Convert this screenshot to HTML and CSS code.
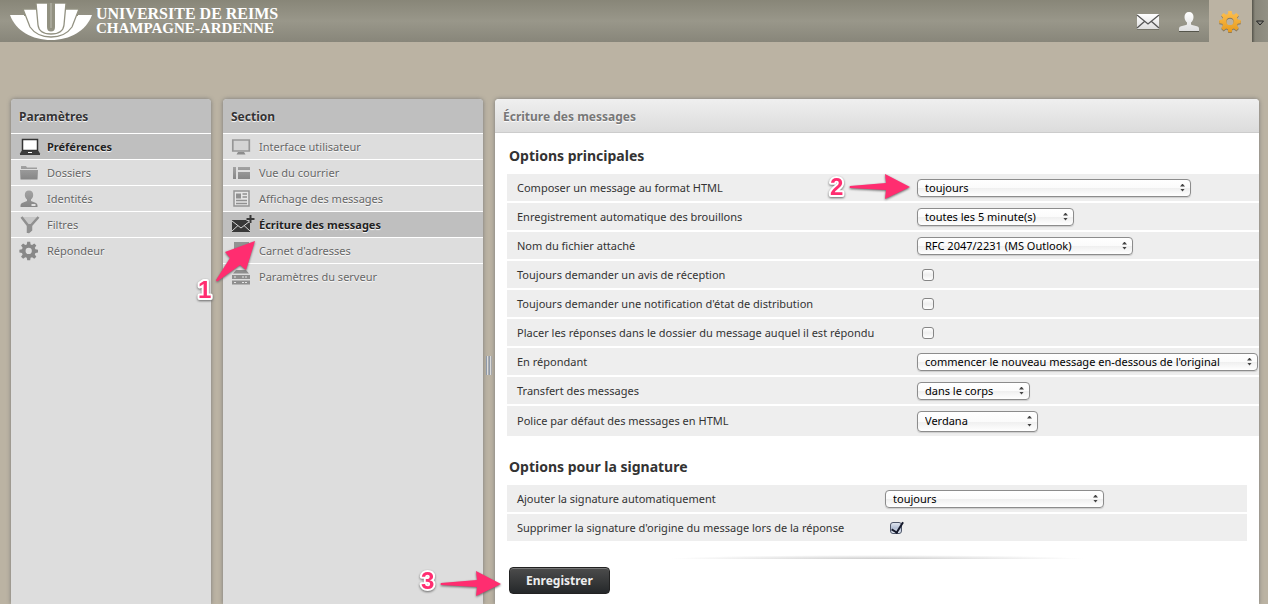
FILE: index.html
```html
<!DOCTYPE html>
<html lang="fr">
<head>
<meta charset="utf-8">
<title>Écriture des messages</title>
<link rel="stylesheet" href="styles.css">
</head>
<body>
<svg class="defs" aria-hidden="true">
  <defs>
    <linearGradient id="g-grey" x1="0" y1="0" x2="0" y2="1"><stop offset="0" stop-color="#a2a2a2"/><stop offset="1" stop-color="#868686"/></linearGradient>
    <linearGradient id="g-white" x1="0" y1="0" x2="0" y2="1"><stop offset="0" stop-color="#ffffff"/><stop offset="1" stop-color="#dedede"/></linearGradient>
    <linearGradient id="g-gold" x1="0" y1="0" x2="0" y2="1"><stop offset="0" stop-color="#fdc050"/><stop offset="1" stop-color="#e79a1c"/></linearGradient>
    <path id="gear" fill-rule="evenodd" d="M9.300 1h3.400l.5 3 1.700.7 2.500-1.800 2.400 2.400L18 7.800l.7 1.700 3 .5v3.200l-3 .6-.7 1.700 1.800 2.500-2.400 2.400-2.500-1.800-1.700.7-.5 2.900H9.300l-.5-2.900-1.700-.7-2.500 1.800-2.400-2.400L4 15.500l-.7-1.700-3-.6V10l3-.5L4 7.800 2.200 5.300l2.400-2.400 2.500 1.800L8.800 4zM11 7.800a3.600 3.600 0 1 0 0 7.200 3.600 3.600 0 0 0 0-7.200z"/>
  </defs>
</svg>

<header class="topbar">
  <a class="brand" href="#">
    <svg class="brand-mark" width="84" height="38" viewBox="0 0 84 38" aria-hidden="true">
      <path fill="#fff" d="M1 12H83C77 28 61 37 42 37S7 28 1 12z"/>
      <path fill="#929181" d="M15 11h54v2H15z"/>
      <path fill="#fff" stroke="#929181" stroke-width="1.300" d="M14 6H70L63 24Q56 34 42 34T21 24z"/>
      <path fill="#929181" d="M27 5h30v2H27z"/>
      <path fill="#fff" stroke="#929181" stroke-width="1.300" d="M27 0H57L55 22Q54 31 42 31T29 22z"/>
      <path fill="#fff" stroke="#929181" stroke-width="2" d="M39 -2V24q0 3.500 3 3.500t3-3.500V-2"/>
      <path fill="#929181" d="M39 0h6v24q0 3-3 3t-3-3z"/>
      <path stroke="#bdbcb1" stroke-width="1" d="M42 0v25"/>
    </svg>
    <span class="brand-text"><span class="brand-top">UNIVERSITE DE REIMS</span><span class="brand-bottom">CHAMPAGNE-ARDENNE</span></span>
  </a>
  <nav class="taskbar" aria-label="Applications">
    <a class="task" href="#" aria-label="Courriel">
      <svg width="24" height="20" viewBox="0 0 24 20"><path d="M1 4h22v15H1z" fill="#55554b" opacity=".5"/><path d="M1 3h22v15H1z" fill="url(#g-white)"/><path d="M1 4l11 9 11-9M1 17l8-7M23 17l-8-7" fill="none" stroke="#555" stroke-width="1.300"/></svg>
    </a>
    <a class="task" href="#" aria-label="Contacts">
      <svg width="22" height="22" viewBox="0 0 22 22"><path d="M11 2c3 0 4.500 2 4.500 5S14 11.500 13 12.500V14q0 .8 1 1l5 1.200q2 .6 2 2.300V21H1v-2.500q0-1.700 2-2.300L8 15q1-.2 1-1v-1.500C8 11.500 6.500 10 6.500 7S8 2 11 2z" fill="url(#g-white)"/><path d="M1 21.500h20" stroke="#55554b"/></svg>
    </a>
    <a class="task task-active" href="#" aria-label="Paramètres">
      <svg width="24" height="24" viewBox="0 -1 24 24"><use href="#gear" y="1" fill="#7d7565"/><use href="#gear" fill="url(#g-gold)"/></svg>
    </a>
    <button class="task-more" type="button" aria-label="Plus">
      <svg width="8" height="6" viewBox="0 0 8 6"><path d="M0.500 1h7L4 5z" fill="#8a8a83" stroke="#222" stroke-width="1"/></svg>
    </button>
  </nav>
</header>

<main class="workspace">
  <section class="panel list-panel">
    <h2 class="panel-title">Paramètres</h2>
    <nav class="list" aria-label="Paramètres">
      <a class="item selected" href="#"><svg class="icon" viewBox="0 0 24 20"><path d="M4.500 2.500h15v11h-15z" fill="#fff" stroke="#333" stroke-width="1.500"/><path d="M3.500 14h17l1.500 2.500v1.500H2v-1.500z" fill="#3c3c3c"/><path d="M10 15.500h4" stroke="#fff"/></svg>Préférences</a>
      <a class="item" href="#"><svg class="icon" viewBox="0 0 24 20"><path d="M3 4V3h5l1 1.500h10V6H3zM2 7h18l-.5 9.500h-17z" fill="url(#g-grey)"/></svg>Dossiers</a>
      <a class="item" href="#"><svg class="icon" viewBox="0 0 24 20"><path d="M11 1.500c3 0 4.200 2 4.200 4.500S14 9.500 13 10.500V12l5 2q1.500.6 1.500 2.500v1.500h-17v-1.500q0-1.900 1.500-2.500l5-2v-1.500C8 9.500 6.800 8.500 6.800 6S8 1.500 11 1.500z" fill="url(#g-grey)"/><path d="M13.500 16h4" stroke="#fff" stroke-width="1.500"/></svg>Identités</a>
      <a class="item" href="#"><svg class="icon" viewBox="0 0 24 20"><path d="M4 2h16l-5 7H9z" fill="#c8c8c8"/><path d="M3.500 2L10 10.500V18M20.500 2L13 10.500V15l-3 2.500" fill="none" stroke="#909090" stroke-width="2.500"/><path d="M9 9h5v6l-4 3z" fill="#909090"/></svg>Filtres</a>
      <a class="item" href="#"><svg class="icon" viewBox="-1 0 27 23"><use href="#gear" fill="#888"/></svg>Répondeur</a>
    </nav>
  </section>

  <section class="panel list-panel section-panel">
    <h2 class="panel-title">Section</h2>
    <nav class="list" aria-label="Section">
      <a class="item" href="#"><svg class="icon" viewBox="0 0 24 20"><path d="M2.800 3h16.500v11H2.800z" fill="#d4d4d4" stroke="#969696" stroke-width="1.700"/><path d="M8 15h6l1.500 2.500h-9z" fill="#8c8c8c"/></svg>Interface utilisateur</a>
      <a class="item" href="#"><svg class="icon" viewBox="0 0 24 20"><path d="M3 4h3v12H3zM8 4h12v3H8zM8 9h12v7H8z" fill="url(#g-grey)"/></svg>Vue du courrier</a>
      <a class="item" href="#"><svg class="icon" viewBox="0 0 24 20"><path d="M4 2h15v15H4z" fill="#e6e6e6" stroke="#949494" stroke-width="1.500"/><path d="M6 4.500h5v5H6z" fill="#909090"/><path d="M12.500 5H17M12.500 8H17M6 11.500h11M6 14.500h11" stroke="#909090" stroke-width="1.300"/></svg>Affichage des messages</a>
      <a class="item selected" href="#"><svg class="icon" viewBox="0 0 24 20"><path d="M2 5h18v12H2z" fill="#383838"/><path d="M2 6l9 7 9-7M2 16l6-5.500M20 16l-6-5.500" fill="none" stroke="#d5d5d5"/><path d="M20.500 0v8M16.500 4h8" stroke="#c2c2c2" stroke-width="4"/><path d="M20.500 0v8M16.500 4h8" stroke="#383838" stroke-width="2"/></svg>Écriture des messages</a>
      <a class="item" href="#"><svg class="icon" viewBox="0 0 24 20"><path d="M4 1h15v16H4z" fill="#929292"/></svg>Carnet d'adresses</a>
      <a class="item" href="#"><svg class="icon" viewBox="0 0 24 20"><path d="M6 3h10l3 3.500H3zM2 8h18v4H2zM2 13.500h18v4H2z" fill="#8e8e8e"/><path d="M4 10h3M12 10h6M4 15.500h3M12 15.500h6" stroke="#e4e4e4" stroke-dasharray="2 1"/></svg>Paramètres du serveur</a>
    </nav>
  </section>

  <div class="splitter" role="separator" aria-orientation="vertical"></div>

  <section class="panel content-panel">
    <h1 class="panel-title content-title">Écriture des messages</h1>
    <form class="prefs">
      <fieldset class="group group-main">
        <legend>Options principales</legend>
        <table class="options">
          <tr><th><label for="html">Composer un message au format HTML</label></th><td><span class="drop w-html"><select id="html"><option>toujours</option></select></span></td></tr>
          <tr><th><label for="draft">Enregistrement automatique des brouillons</label></th><td><span class="drop w-draft"><select id="draft"><option>toutes les 5 minute(s)</option></select></span></td></tr>
          <tr><th><label for="attach">Nom du fichier attaché</label></th><td><span class="drop w-attach"><select id="attach"><option>RFC 2047/2231 (MS Outlook)</option></select></span></td></tr>
          <tr><th><label for="mdn">Toujours demander un avis de réception</label></th><td><input class="tick" id="mdn" type="checkbox"></td></tr>
          <tr><th><label for="dsn">Toujours demander une notification d'état de distribution</label></th><td><input class="tick" id="dsn" type="checkbox"></td></tr>
          <tr><th><label for="same">Placer les réponses dans le dossier du message auquel il est répondu</label></th><td><input class="tick" id="same" type="checkbox"></td></tr>
          <tr><th><label for="reply">En répondant</label></th><td><span class="drop w-reply"><select id="reply"><option>commencer le nouveau message en-dessous de l'original</option></select></span></td></tr>
          <tr><th><label for="forward">Transfert des messages</label></th><td><span class="drop w-forward"><select id="forward"><option>dans le corps</option></select></span></td></tr>
          <tr class="tall"><th><label for="font">Police par défaut des messages en HTML</label></th><td><span class="drop w-font"><select id="font"><option>Verdana</option></select></span></td></tr>
        </table>
      </fieldset>
      <fieldset class="group group-sign">
        <legend>Options pour la signature</legend>
        <table class="options">
          <tr><th><label for="sign">Ajouter la signature automatiquement</label></th><td><span class="drop w-sign"><select id="sign"><option>toujours</option></select></span></td></tr>
          <tr><th><label for="strip">Supprimer la signature d'origine du message lors de la réponse</label></th><td><input class="tick" id="strip" type="checkbox" checked></td></tr>
        </table>
      </fieldset>
      <div class="rule"></div>
      <button class="save" type="button">Enregistrer</button>
    </form>
  </section>
</main>

<svg class="mark mark-1" width="66" height="70" viewBox="0 0 66 70"><path d="M25 49L39 27 34 21 64 10 55 39 49 34 27 50q-2 1-2-1z"/><text x="7" y="67">1</text></svg>
<svg class="mark mark-2" width="86" height="34" viewBox="0 0 86 34"><path d="M23 15L59 12 58 3 83 16 58 28 59 19 23 17q-1-1 0-2z"/><text x="3" y="24">2</text></svg>
<svg class="mark mark-3" width="86" height="34" viewBox="0 0 86 34"><path d="M23 16L59 13 58 4 83 17 58 29 59 20 23 18q-1-1 0-2z"/><text x="3" y="22">3</text></svg>
</body>
</html>
```
FILE: styles.css
```css
* { box-sizing: border-box; }

body {
  margin: 0;
  min-height: 100vh;
  display: flex;
  flex-direction: column;
  background: #bbb3a3;
  font-family: "Noto Sans", "Lucida Grande", sans-serif;
  font-size: 11px;
  line-height: 16px;
  color: #333;
}

a { color: inherit; text-decoration: none; }

.defs { position: absolute; width: 0; height: 0; }

/* Top bar */
.topbar {
  height: 42px;
  flex: none;
  display: flex;
  justify-content: space-between;
  background: linear-gradient(#888678, #99978a 50%, #88867a);
}
.brand { display: flex; align-items: center; padding-left: 9px; gap: 3px; color: #fff; }
.brand-mark { margin-top: 2px; }
.brand-text { display: flex; flex-direction: column; font-family: "Liberation Serif", serif; font-weight: bold; line-height: 14px; }
.brand-top { font-size: 16px; }
.brand-bottom { font-size: 15px; }
.taskbar { display: flex; }
.task { width: 41px; display: flex; align-items: center; justify-content: center; }
.task-active { width: 43px; background: #bbb3a3; }
.task-more {
  width: 16px;
  padding: 0;
  border: 0;
  background: linear-gradient(90deg, #55544b, #88867a 3px, #929084);
}

/* Panels */
.workspace {
  flex: 1;
  display: grid;
  grid-template-columns: 200px 12px 260px 12px minmax(0, 1fr);
  padding: 57px 9px 0 11px;
}
.panel { border-radius: 4px 4px 0 0; box-shadow: 0 0 4px #777; background: #ddd; overflow: hidden; }
.section-panel { grid-column: 3; }
.content-panel { background: #fff; }
.panel-title {
  margin: 0;
  height: 35px;
  padding: 0 8px;
  border-bottom: 1px solid #fff;
  background: #bfbfbf;
  font-size: 12px;
  line-height: 35px;
  color: #333;
  text-shadow: 0 1px 1px #fff;
}
.content-title {
  height: 34px;
  border-color: #ccc;
  background: linear-gradient(#efefef, #dcdcdc);
  color: #777;
}
.item {
  display: flex;
  align-items: center;
  gap: 5px;
  height: 26px;
  padding-left: 7px;
  border-bottom: 1px solid #fff;
  color: #666;
  text-shadow: 0 1px 1px #fff;
}
.item:last-child { border-color: transparent; }
.selected { background: #bfbfbf; color: #222; font-weight: bold; }
.icon { width: 24px; height: 20px; flex: none; overflow: visible; }

.splitter {
  grid-column: 4;
  align-self: center;
  justify-self: center;
  width: 6px;
  height: 19px;
  margin-top: 28px;
  background: repeating-linear-gradient(90deg, #8f9aaa 0 1px, #dcdcdc 1px 2px, #a9abad 2px 3px);
}

/* Preferences form */
.prefs { padding: 15px 12px 8px; }
.group { margin: 0; padding: 0; border: 0; min-width: 0; }
.group legend { padding: 0 2px; margin-bottom: 10px; font-size: 14px; font-weight: bold; line-height: 16px; }
.group-main { margin-right: -12px; }
.group-sign { margin-top: 21px; }
.options { width: 100%; border-collapse: separate; border-spacing: 0; table-layout: fixed; }
.options th, .options td { height: 29px; padding: 0 0 0 2px; border-bottom: 2px solid #fff; background: #eee; text-align: left; font-weight: normal; vertical-align: middle; }
.options th { width: 408px; padding-left: 10px; white-space: nowrap; }
.group-sign th { width: 376px; }
.options .tall th, .options .tall td { height: 32px; }

.drop { position: relative; display: block; height: 18px; }
.drop select {
  appearance: none;
  display: block;
  width: 100%;
  height: 100%;
  padding: 0 18px 0 7px;
  border: 1px solid #8c8c8c;
  border-radius: 4px;
  background: linear-gradient(#fff, #fbfbfb 50%, #efefef 51%, #fff);
  box-shadow: 0 1px 1px #ccc;
  font: inherit;
  line-height: 16px;
  color: #000;
}
.drop::before, .drop::after {
  content: "";
  position: absolute;
  right: 6px;
  width: 5px;
  height: 3px;
  background: #444;
  pointer-events: none;
}
.drop::before { top: 5px; clip-path: polygon(50% 0, 100% 100%, 0 100%); }
.drop::after { bottom: 5px; clip-path: polygon(0 0, 100% 0, 50% 100%); }
.w-html { width: 274px; }
.w-draft { width: 157px; }
.w-attach { width: 216px; }
.w-reply { width: 341px; }
.w-forward { width: 113px; }
.w-font { width: 121px; height: 21px; }
.w-sign { width: 219px; }

.tick {
  appearance: none;
  display: block;
  position: relative;
  width: 12px;
  height: 12px;
  margin: 0 0 0 5px;
  border: 1px solid #858585;
  border-radius: 3px;
  background: linear-gradient(#fff, #eee 50%, #fff);
}
.tick:checked { border-color: #4d5569; background: linear-gradient(#dfe5ef, #b4bfd4 50%, #e2e8f2); }
.tick:checked::after {
  content: "";
  position: absolute;
  left: 3px;
  top: -3px;
  width: 5px;
  height: 11px;
  border: solid #15192b;
  border-width: 0 2px 2px 0;
  transform: rotate(32deg);
}

.rule {
  width: 420px;
  max-width: 100%;
  height: 4px;
  margin: 12px auto 8px;
  background: radial-gradient(ellipse at 50% 100%, #ccc, #fff 70%);
}
.save {
  display: block;
  height: 27px;
  margin-left: 2px;
  padding: 0 16px;
  border: 1px solid #222;
  border-radius: 4px;
  background: linear-gradient(#4c4c4c, #25282a);
  box-shadow: inset 0 1px 0 #777;
  font: inherit;
  font-size: 12px;
  font-weight: bold;
  color: #eee;
}

/* Step markers laid over the page */
.mark { position: absolute; overflow: visible; filter: drop-shadow(0 1px 1px #666); pointer-events: none; }
.mark path { fill: #ff2d70; }
.mark text {
  font: bold 24px "Liberation Sans", sans-serif;
  fill: #ff2d70;
  stroke: #fff;
  stroke-width: 4px;
  stroke-linejoin: round;
  paint-order: stroke;
}
.mark-1 { left: 191px; top: 231px; }
.mark-2 { left: 827px; top: 171px; }
.mark-3 { left: 418px; top: 567px; }
```
